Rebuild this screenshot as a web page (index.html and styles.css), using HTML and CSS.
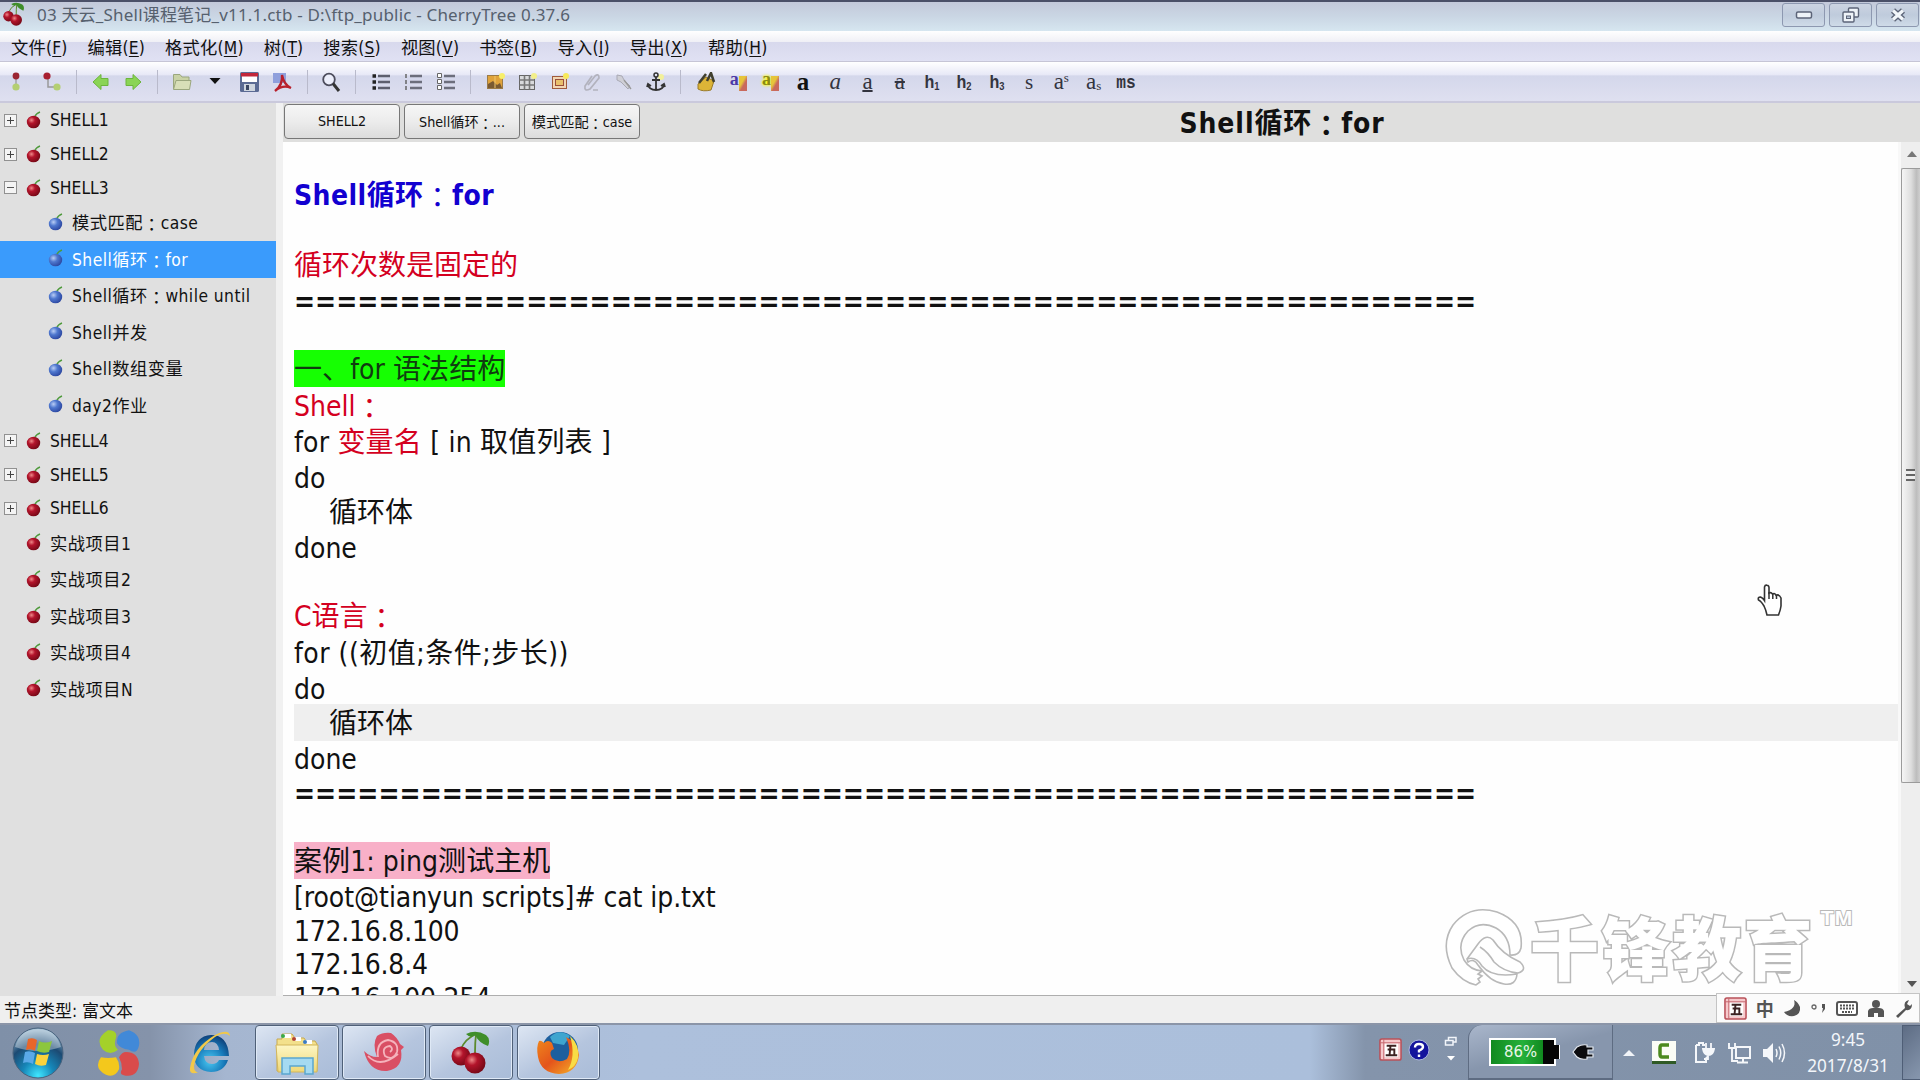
FILE: index.html
```html
<!DOCTYPE html>
<html lang="zh-CN">
<head>
<meta charset="utf-8">
<title>CherryTree</title>
<link rel="stylesheet" href="styles.css">
</head>
<body>
<svg class="defs" width="0" height="0">
  <defs>
    <radialGradient id="redBall" cx=".35" cy=".35" r=".75"><stop offset="0" stop-color="#e88"/><stop offset=".35" stop-color="#b3142b"/><stop offset="1" stop-color="#6d0714"/></radialGradient>
    <radialGradient id="blueBall" cx=".35" cy=".35" r=".75"><stop offset="0" stop-color="#b9cdf5"/><stop offset=".4" stop-color="#4f78cf"/><stop offset="1" stop-color="#27409a"/></radialGradient>
    <radialGradient id="orb" cx=".5" cy=".95" r=".9"><stop offset="0" stop-color="#3fe6ff"/><stop offset=".35" stop-color="#1686b8"/><stop offset=".7" stop-color="#1c4a73"/><stop offset="1" stop-color="#8fb0c8"/></radialGradient>
    <radialGradient id="ieBlue" cx=".45" cy=".7" r=".7"><stop offset="0" stop-color="#49c8f2"/><stop offset=".6" stop-color="#1779b9"/><stop offset="1" stop-color="#0e3f78"/></radialGradient>
    <linearGradient id="fox" x1="0" y1="0" x2="1" y2="1"><stop offset="0" stop-color="#f08a1d"/><stop offset=".5" stop-color="#e4541b"/><stop offset="1" stop-color="#f6b62a"/></linearGradient>
    <linearGradient id="folder" x1="0" y1="0" x2="0" y2="1"><stop offset="0" stop-color="#fdf6c4"/><stop offset="1" stop-color="#f0d878"/></linearGradient>
    <symbol id="cherry" viewBox="0 0 16 18"><path d="M8.5 6Q10 2.5 14 1" fill="none" stroke="#4f9a3c" stroke-width="1.4"/><ellipse cx="7.5" cy="11" rx="6.7" ry="6.3" fill="url(#redBall)"/></symbol>
    <symbol id="berry" viewBox="0 0 16 18"><path d="M8.5 6Q10 2.5 14 1" fill="none" stroke="#4f9a3c" stroke-width="1.4"/><ellipse cx="7.5" cy="11" rx="6.7" ry="6.3" fill="url(#blueBall)"/></symbol>
    <symbol id="cherries" viewBox="0 0 40 44"><path d="M10 18Q14 8 25 3Q24 12 24 22" fill="none" stroke="#5c8a2d" stroke-width="1.8"/><path d="M15 3Q25-2 35 4Q40 8 37 15Q28 12 24 4Q20 8 15 3Z" fill="#3f8e2a"/><circle cx="10" cy="25" r="9.5" fill="url(#redBall)"/><circle cx="24" cy="32" r="10.5" fill="url(#redBall)"/></symbol>
    <symbol id="wubi" viewBox="0 0 24 24"><rect x="1" y="1" width="22" height="22" rx="2" fill="#f6c9cc" stroke="#b9515a" stroke-width="1.6"/><path d="M5 1v22M1 5h22" stroke="#c4666e" fill="none"/><rect x="6" y="6" width="14" height="14" fill="#fff"/><path d="M8 8h10M12 8l-1 10M9 12h7v6M7 18h12" stroke="#3c2222" stroke-width="2" fill="none"/></symbol>
  </defs>
</svg>

<header class="titlebar">
  <svg class="app-icon" width="22" height="25"><use href="#cherries"/></svg>
  <span class="title-text">03 天云_Shell课程笔记_v11.1.ctb - D:\ftp_public - CherryTree 0.37.6</span>
  <div class="window-buttons">
    <span class="win-btn"><svg width="18" height="10"><rect x="1.5" y="2" width="15" height="6" rx="1.5" fill="#eef3f8" stroke="#5c6478" stroke-width="1.5"/></svg></span>
    <span class="win-btn"><svg width="18" height="16"><rect x="6.5" y="1" width="10" height="9" rx="1" fill="#eef3f8" stroke="#5c6478" stroke-width="1.4"/><rect x="1" y="5" width="11" height="10" rx="1" fill="#eef3f8" stroke="#5c6478" stroke-width="1.4"/><rect x="4.5" y="9" width="4" height="2.5" fill="#b9c6d8" stroke="#5c6478"/></svg></span>
    <span class="win-btn"><svg width="18" height="16"><path d="M4 3.5L14 12.5M14 3.5L4 12.5" stroke="#5c6478" stroke-width="6"/><path d="M4 3.5L14 12.5M14 3.5L4 12.5" stroke="#f2f6fa" stroke-width="3.2"/></svg></span>
  </div>
</header>

<nav class="menubar">
  <span>文件(<u>F</u>)</span><span>编辑(<u>E</u>)</span><span>格式化(<u>M</u>)</span><span>树(<u>T</u>)</span><span>搜索(<u>S</u>)</span><span>视图(<u>V</u>)</span><span>书签(<u>B</u>)</span><span>导入(<u>I</u>)</span><span>导出(<u>X</u>)</span><span>帮助(<u>H</u>)</span>
</nav>

<div class="toolbar">
  <div class="group g-node">
    <svg class="tool" viewBox="0 0 24 20"><path d="M12 7v6" stroke="#888"/><circle cx="12" cy="4" r="3.4" fill="#9b2432"/><circle cx="12" cy="15" r="3.6" fill="#b4cf72"/></svg>
    <svg class="tool" viewBox="0 0 24 20"><path d="M8 5v10h8" stroke="#999" stroke-width="1.5" fill="none"/><circle cx="7" cy="4" r="3.6" fill="#a81f30"/><circle cx="17" cy="15" r="3.6" fill="#b4cf72"/></svg>
  </div>
  <div class="group g-nav">
    <svg class="tool" viewBox="0 0 24 20"><path d="M4 10L12 2.5V6.5H19V13.5H12V17.5Z" fill="#8ad455" stroke="#6cb53c"/></svg>
    <svg class="tool" viewBox="0 0 24 20"><path d="M20 10L12 2.5V6.5H5V13.5H12V17.5Z" fill="#8ad455" stroke="#6cb53c"/></svg>
  </div>
  <div class="group g-file">
    <svg class="tool" viewBox="0 0 24 20"><path d="M3.5 17V2.5H10L12 5H19V8" fill="#c9d2a6" stroke="#9ba77e"/><path d="M3.5 17.5L6 8.5H21L19.5 17.5Z" fill="#d8dfb8" stroke="#9ba77e"/></svg>
    <svg class="tool" viewBox="0 0 24 20"><path d="M6.5 6H17.5L12 12Z" fill="#111"/></svg>
    <svg class="tool" viewBox="0 0 24 20"><rect x="4" y="0" width="19" height="20" rx="1.5" fill="#5b6b94"/><rect x="6" y="1" width="15" height="9" fill="#fff"/><rect x="5" y="1" width="17" height="3.5" fill="#c2263a"/><rect x="8" y="12" width="11" height="7" fill="#cfd6df"/><rect x="10" y="13" width="3" height="5" fill="#3b4763"/></svg>
    <svg class="tool" viewBox="0 0 24 20"><rect x="4" y="1" width="13" height="10" fill="#8f9fdc"/><path d="M6 19Q14 13 13 3Q15 13 22 16Q14 12 6 19" fill="none" stroke="#b8202c" stroke-width="2.3"/></svg>
  </div>
  <div class="group g-find">
    <svg class="tool" viewBox="0 0 24 20"><circle cx="10" cy="7.5" r="5.8" fill="#eceefb" stroke="#4c4c5c" stroke-width="1.8"/><path d="M14 11.5L20 19" stroke="#333" stroke-width="3"/></svg>
  </div>
  <div class="group g-list">
    <svg class="tool" viewBox="0 0 24 20"><path d="M8 4H20M8 10H20M8 16H20" stroke="#5d5f6e" stroke-width="2.4"/><path d="M2.5 4h3.5M2.5 10h3.5M2.5 16h3.5" stroke="#222" stroke-width="3.4"/></svg>
    <svg class="tool" viewBox="0 0 24 20"><path d="M8 4H20M8 10H20M8 16H20" stroke="#6c6e7c" stroke-width="2.4"/><path d="M4 2v4M4 8v4M4 14v4" stroke="#666" stroke-width="1.5"/></svg>
    <svg class="tool" viewBox="0 0 24 20"><path d="M9 4H20M9 10H20M9 16H20" stroke="#6c6e7c" stroke-width="2.6"/><path d="M2.5 1.5h4v4h-4zM2.5 7.5h4v4h-4zM2.5 13.5h4v4h-4z" stroke="#666" fill="#fff"/></svg>
  </div>
  <div class="group g-insert">
    <svg class="tool" viewBox="0 0 24 20"><rect x="4.5" y="3.5" width="15" height="13" fill="#e0a33b" stroke="#9c7b47"/><path d="M5 12l5-3 4 4 3-2 2 5H5z" fill="#7a5a32"/><path d="M12 4v12" stroke="#f0c66c"/><circle cx="19" cy="4" r="3" fill="#f7ef6a"/></svg>
    <svg class="tool" viewBox="0 0 24 20"><rect x="4.5" y="3.5" width="15" height="14" fill="#d9dadc" stroke="#666"/><path d="M4.5 8h15M4.5 13h15M9.5 3.5v14M14.5 3.5v14" stroke="#777" stroke-width="1.6"/><circle cx="19" cy="4" r="3" fill="#f3ef8a"/></svg>
    <svg class="tool" viewBox="0 0 24 20"><rect x="4.5" y="4.5" width="14" height="12" fill="#f1d6b3" stroke="#a05b3c"/><rect x="7.5" y="7.5" width="8" height="6" fill="#e9c06b" stroke="#9b4f3a"/><circle cx="18" cy="4" r="3" fill="#f7e95a"/></svg>
    <svg class="tool" viewBox="0 0 24 20"><path d="M8 13L15 4Q19 1 19 6L10 17Q4 20 5 14L12 4M13 18h5" fill="none" stroke="#b2b2bd" stroke-width="1.7"/></svg>
    <svg class="tool" viewBox="0 0 24 20"><path d="M5 3l5 1 2 4 6 6-2 3-7-7-4-2z" fill="#cfcfd6" stroke="#a9a9b4"/><path d="M12 8l7 9" stroke="#999" stroke-width="1.3"/></svg>
    <svg class="tool" viewBox="0 0 24 20"><circle cx="17" cy="5" r="3" fill="#f2f09a"/><circle cx="12" cy="3" r="2" fill="none" stroke="#333" stroke-width="1.5"/><path d="M12 5V18M8 8h8M3.5 12Q5 18 12 18Q19 18 20.5 12M3 15l1-3 3 2M21 15l-1-3-3 2" fill="none" stroke="#333" stroke-width="1.8"/></svg>
  </div>
  <div class="group g-format">
    <svg class="tool" viewBox="0 0 24 20"><path d="M4 12L12 5L20 9L17 18Q9 20 4 17Z" fill="#dcb437" stroke="#9a7b28"/><path d="M13 9L17 1L20 10M5 11l7-9" stroke="#41402f" stroke-width="2.5" fill="none"/></svg>
    <span class="tool letter color-a">a<i class="brush"></i></span>
    <span class="tool letter color-a mark">a<i class="brush"></i></span>
    <span class="tool letter bold">a</span>
    <span class="tool letter ital">a</span>
    <span class="tool letter under">a</span>
    <span class="tool letter strike">a</span>
    <span class="tool letter head">h<small>1</small></span>
    <span class="tool letter head">h<small>2</small></span>
    <span class="tool letter head">h<small>3</small></span>
    <span class="tool letter little">s</span>
    <span class="tool letter sup">a<small>s</small></span>
    <span class="tool letter sub">a<small>s</small></span>
    <span class="tool letter mono">ms</span>
  </div>
</div>

<main class="workspace">
  <aside class="tree">
    <div class="node"><i class="box plus"></i><svg class="fruit"><use href="#cherry"/></svg><span>SHELL1</span></div>
    <div class="node"><i class="box plus"></i><svg class="fruit"><use href="#cherry"/></svg><span>SHELL2</span></div>
    <div class="node"><i class="box"></i><svg class="fruit"><use href="#cherry"/></svg><span>SHELL3</span></div>
    <div class="node tall child"><svg class="fruit"><use href="#berry"/></svg><span>模式匹配<b class="cn" lang="ja">：</b>case</span></div>
    <div class="node tall child selected"><svg class="fruit"><use href="#berry"/></svg><span>Shell循环<b class="cn" lang="ja">：</b>for</span></div>
    <div class="node tall child"><svg class="fruit"><use href="#berry"/></svg><span>Shell循环<b class="cn" lang="ja">：</b>while until</span></div>
    <div class="node tall child"><svg class="fruit"><use href="#berry"/></svg><span>Shell并发</span></div>
    <div class="node tall child"><svg class="fruit"><use href="#berry"/></svg><span>Shell数组变量</span></div>
    <div class="node tall child"><svg class="fruit"><use href="#berry"/></svg><span>day2作业</span></div>
    <div class="node"><i class="box plus"></i><svg class="fruit"><use href="#cherry"/></svg><span>SHELL4</span></div>
    <div class="node"><i class="box plus"></i><svg class="fruit"><use href="#cherry"/></svg><span>SHELL5</span></div>
    <div class="node"><i class="box plus"></i><svg class="fruit"><use href="#cherry"/></svg><span>SHELL6</span></div>
    <div class="node tall leaf"><svg class="fruit"><use href="#cherry"/></svg><span>实战项目1</span></div>
    <div class="node tall leaf"><svg class="fruit"><use href="#cherry"/></svg><span>实战项目2</span></div>
    <div class="node tall leaf"><svg class="fruit"><use href="#cherry"/></svg><span>实战项目3</span></div>
    <div class="node tall leaf"><svg class="fruit"><use href="#cherry"/></svg><span>实战项目4</span></div>
    <div class="node tall leaf"><svg class="fruit"><use href="#cherry"/></svg><span>实战项目N</span></div>
  </aside>

  <section class="content">
    <div class="tabs">
      <span class="tab">SHELL2</span>
      <span class="tab"><span>Shell循环<b class="cn" lang="ja">：</b>...</span></span>
      <span class="tab active"><span>模式匹配<b class="cn" lang="ja">：</b>case</span></span>
      <h1 class="node-title">Shell循环<b class="cn" lang="ja">：</b>for</h1>
    </div>
    <div class="editor-row">
      <article class="editor">
        <div class="line"></div>
        <div class="line cjk heading">Shell循环<b class="cn" lang="ja">：</b>for</div>
        <div class="line"></div>
        <div class="line cjk red">循环次数是固定的</div>
        <div class="line rule">========================================================</div>
        <div class="line"></div>
        <div class="line cjk"><span class="mark-green">一、for 语法结构</span></div>
        <div class="line cjk red">Shell<b class="cn" lang="ja">：</b></div>
        <div class="line cjk spaced">for <span class="red">变量名</span> [ in 取值列表 ]</div>
        <div class="line">do</div>
        <div class="line cjk indent">循环体</div>
        <div class="line">done</div>
        <div class="line"></div>
        <div class="line cjk red">C语言<b class="cn" lang="ja">：</b></div>
        <div class="line cjk spaced wider">for ((初值;条件;步长))</div>
        <div class="line">do</div>
        <div class="line cjk indent current">循环体</div>
        <div class="line">done</div>
        <div class="line rule">========================================================</div>
        <div class="line"></div>
        <div class="line cjk"><span class="mark-pink">案例1: ping测试主机</span></div>
        <div class="line prompt">[root@tianyun scripts]# cat ip.txt</div>
        <div class="line address">172.16.8.100</div>
        <div class="line address">172.16.8.4</div>
        <div class="line address">172.16.100.254</div>
      </article>
      <div class="scrollbar">
        <i class="arrow up"></i>
        <div class="thumb"><i class="grip"></i></div>
        <i class="arrow down"></i>
      </div>
    </div>
  </section>
</main>

<div class="watermark">
  <svg width="82" height="80" viewBox="0 0 82 80"><path d="M32 77Q18 74 8 60Q-4 36 9 17Q26-4 53 4Q80 14 77 40Q75 48 66 47Q66 28 52 20Q36 12 24 23Q12 36 20 52Q26 62 38 63L34 66L38 68L34 71L36 74Z" fill="#fff" stroke="#b9b9b9" stroke-width="1.6"/><path d="M23 51L34 36Q42 25 49 32Q58 46 76 54Q84 62 74 65Q60 64 50 54Q44 44 36 39M23 51Q32 48 38 58Q48 70 73 66Q72 78 60 76Q46 74 34 57Q30 50 24 54Z" fill="#fff" stroke="#b9b9b9" stroke-width="1.6"/></svg>
  <span class="wm-name">千锋教育</span><span class="wm-tm">TM</span>
</div>

<svg class="cursor" width="26" height="33" viewBox="0 0 26 33"><path d="M7 22Q4 17 1.5 16Q.5 13 3.5 13Q6 14 7.5 16.5V3Q8 .8 10 1.2Q12 1.5 12 3.5V9Q14 7.8 15.5 10Q18 8.8 19 11.2Q22 10 24 14V22Q23.5 26 21.5 31H10Q9 26 7 22Z" fill="#fff" stroke="#333" stroke-width="1.6"/><path d="M12 8v7M15.8 10v5M19.5 11v4" stroke="#333" stroke-width="1.5"/></svg>

<footer class="statusbar">
  <span class="node-type">节点类型: 富文本</span>
  <div class="ime-bar">
    <svg width="23" height="23"><use href="#wubi"/></svg>
    <span class="ime-zh">中</span>
    <svg width="19" height="19"><path d="M11 1Q14 10 1 13Q4 18 11 17Q18 15 17 8Q15 3 11 1Z" fill="#555"/></svg>
    <svg width="17" height="12"><circle cx="4" cy="5" r="2" fill="none" stroke="#666" stroke-width="1.3"/><path d="M12 2h3v5l-3 4 1-5h-1z" fill="#555"/></svg>
    <svg width="22" height="17"><rect x="1" y="2" width="20" height="13" rx="2" fill="#fff" stroke="#555" stroke-width="2"/><path d="M4 5.5h14M4 8.500h14M6 12h10" stroke="#555" stroke-width="2" stroke-dasharray="2 1"/></svg>
    <svg width="18" height="19"><circle cx="9" cy="5" r="4" fill="#555"/><path d="M1 18V12Q2 9 6 9H12Q16 9 17 12V18H11V14H7V18Z" fill="#555"/></svg>
    <svg width="19" height="19"><path d="M2 17L11 9Q9 2 15 1L13 5L16 7L18 5Q18 12 12 11L4 19Z" fill="#555"/></svg>
  </div>
</footer>

<footer class="taskbar">
  <div class="launch">
    <svg width="52" height="52" viewBox="0 0 52 52"><circle cx="26" cy="26" r="25" fill="url(#orb)" stroke="#48627d"/><path d="M3 20Q8 2 26 2Q44 2 49 20Q26 28 3 20" fill="#fff" opacity=".35"/><path d="M16 12Q21 10 25 13L23 24Q19 21 14 23Z" fill="#e8662a"/><path d="M27 14Q33 17 40 14L37 25Q31 27 25 24Z" fill="#8cc63e"/><path d="M13 25Q18 23 23 26L21 37Q16 34 11 36Z" fill="#5aa9e8"/><path d="M25 27Q31 29 37 27L34 38Q28 40 23 37Z" fill="#fbd23c"/></svg>
    <svg width="46" height="50" viewBox="0 0 46 46" preserveAspectRatio="none"><path d="M12 2Q22 2 20 9Q17 16 22 20Q14 26 7 20Q-2 10 12 2Z" fill="#a4d12a"/><path d="M33 2Q45 6 43 16Q41 25 33 20Q24 19 21 14Q20 4 33 2Z" fill="#4189d8"/><path d="M5 27Q12 28 20 27Q24 32 23 38Q19 46 10 43Q-3 37 5 27Z" fill="#f3c81c"/><path d="M30 22Q42 22 43 33Q42 44 32 44Q22 44 26 38Q26 32 23 27Q26 22 30 22Z" fill="#d94b4b"/></svg>
    <svg width="46" height="46" viewBox="0 0 46 46"><path fill-rule="evenodd" d="M24 5Q41 5 42 26H17Q18 34 25 34Q30 34 32 30H41Q37 42 24 42Q7 41 7 24Q8 6 24 5ZM17 20H32Q31 12 25 12Q18 12 17 20Z" fill="url(#ieBlue)"/><path d="M43 6Q42-2 28 5Q6 18 3 38Q2 46 12 42Q7 43 7 36Q10 20 28 7Q38 1 43 6Z" fill="#f1c84a"/></svg>
  </div>
  <div class="tasks">
    <span class="task"><svg width="46" height="44" viewBox="0 0 46 44"><path d="M3 8H8V3H18L21 7H30L32 10H41L43 13V40H3Z" fill="#f3e08c" stroke="#c7a950"/><path d="M9 5h8M19 8h8M31 11h7" stroke="#fff" stroke-width="4"/><circle cx="9" cy="5" r="2" fill="#3aa948"/><circle cx="20" cy="8" r="2" fill="#b2412e"/><circle cx="31" cy="11" r="2" fill="#3b7bc4"/><path d="M2 14H44L43 41H4Z" fill="url(#folder)" stroke="#d2b65c"/><path d="M8 43V27H39V43H31V35H16V43Z" fill="#a5daf1" stroke="#5ba6cf" stroke-width="1.5"/></svg></span>
    <span class="task"><svg width="42" height="42" viewBox="0 0 42 42"><path d="M14 4Q20 0 28 1Q34 5 37 12L41 15L38 18Q41 36 24 39Q6 40 1 19Q7 25 14 25Q9 12 14 4Z" fill="#d94f64"/><path d="M15 25Q13 10 25 8Q36 10 34 20Q30 29 22 24Q18 15 27 14Q31 17 27 20M5 24Q17 37 35 22" fill="none" stroke="#f5b3bc" stroke-width="1.8"/></svg></span>
    <span class="task"><svg width="42" height="44" viewBox="0 0 40 44"><use href="#cherries"/></svg></span>
    <span class="task"><svg width="44" height="44" viewBox="0 0 44 44"><circle cx="24" cy="19" r="18" fill="#1d5f9e"/><path d="M14 6Q23-3 34 5L28 14L17 12Z" fill="#3ea5cf"/><path d="M3 10Q5 9 8 12Q12 8 16 12L18 18Q12 20 16 27Q22 33 31 28Q36 20 30 6Q42 12 43 24Q41 42 23 43Q5 42 2 26Q0 16 3 10Z" fill="url(#fox)"/><path d="M34 5Q44 14 42 27Q40 36 32 39Q40 25 34 5Z" fill="#f8dc45"/></svg></span>
  </div>
  <div class="lang">
    <svg width="23" height="23"><use href="#wubi"/></svg>
    <svg width="22" height="22" viewBox="0 0 22 22"><circle cx="11" cy="11" r="10" fill="#14149c" stroke="#aab4dd"/><path d="M7 8.5Q7 5 11 5Q15 5 15 8Q15 10 11 11.5V13.5M11 15.5v2.5" fill="none" stroke="#fff" stroke-width="2.4"/></svg>
    <svg width="14" height="28" viewBox="0 0 14 28"><path d="M4.5 4.5V1.5H12V6H9M1.5 4.5H9V9H1.5Z" fill="none" stroke="#f2f5fa" stroke-width="1.5"/><path d="M3 20H11L7 24.5Z" fill="#fff"/></svg>
  </div>
  <div class="power">
    <span class="battery">86%</span>
    <svg width="24" height="18" viewBox="0 0 24 18"><path d="M1 9L5 4Q10 1 15 2V4H21V7H16V11H21V14H15V16Q8 17 5 14Z" fill="#0b0b0e" stroke="#e4e9f0" stroke-width="1.2"/></svg>
  </div>
  <div class="tray">
    <svg width="12" height="8"><path d="M0 7H12L6 1Z" fill="#f1f4f8"/></svg>
    <svg width="24" height="23" viewBox="0 0 24 23"><path d="M0 0H24V20H0Z" fill="#fbfdf6"/><path d="M0 20H24V23H0Z" fill="#2f5a26"/><path d="M17 4H10Q8 4 8 7V13Q8 16 10 16H17" fill="none" stroke="#4c8a1e" stroke-width="3.5"/></svg>
    <svg width="22" height="24" viewBox="0 0 22 24"><path d="M3 4H6V2H10V4H12M3 4V21H13V17" fill="none" stroke="#f5f7fa" stroke-width="2"/><path d="M13 2v5M18 2v5M10 8H21Q20 14 15.5 14Q11 14 10 8ZM15 14v4h-4" fill="#f5f7fa" stroke="#f5f7fa" stroke-width="1.8"/></svg>
    <svg width="24" height="24" viewBox="0 0 24 24"><path d="M8 6H22V17H8ZM15 17v4M9 21.5H20" fill="#8090a8" stroke="#f5f7fa" stroke-width="2"/><path d="M1 2v5h6V2M4 7v13h6" fill="none" stroke="#f5f7fa" stroke-width="1.9"/></svg>
    <svg width="24" height="22" viewBox="0 0 24 22"><path d="M1 7H5L11 1V21L5 15H1Z" fill="#f5f7fa"/><path d="M14 7Q16 11 14 15M17 4.5Q20.5 11 17 17.5M20 2Q25 11 20 20" fill="none" stroke="#f5f7fa" stroke-width="1.5"/></svg>
  </div>
  <div class="clock"><span>9:45</span><span>2017/8/31</span></div>
  <div class="show-desktop"></div>
</footer>
</body>
</html>
```
FILE: styles.css
```css
* { box-sizing: border-box; }
body {
  margin: 0;
  width: 1920px;
  height: 1080px;
  overflow: hidden;
  display: flex;
  flex-direction: column;
  position: relative;
  background: #dfdfdf;
  color: #111;
  font-family: "DejaVu Sans Condensed", "DejaVu Sans", "Noto Sans CJK SC", sans-serif;
  font-stretch: condensed;
  font-size: 17.3px;
  white-space: nowrap;
}
.defs { position: absolute; }
.cn { font-family: "Noto Sans CJK JP", sans-serif; font-weight: 400; line-height: 0; vertical-align: -.12em; }

/* title bar */
.titlebar {
  flex: none;
  height: 31px;
  display: flex;
  align-items: center;
  padding-left: 3px;
  border-top: 2px solid #4b5068;
  background: linear-gradient(#c3c9da, #cad6e4 50%, #d6e6f0);
}
.app-icon { margin-top: -5px; }
.title-text {
  margin: -6px 0 0 12px;
  color: #56606e;
  font-family: "Noto Sans", "Noto Sans CJK SC", sans-serif;
  font-size: 17px;
  letter-spacing: .19px;
}
.window-buttons { margin-left: auto; display: flex; gap: 4px; align-self: flex-start; padding: 1px 1px 0 0; }
.win-btn {
  width: 43px;
  height: 24px;
  display: flex;
  align-items: center;
  justify-content: center;
  border: 1px solid #8d98b0;
  border-radius: 3px;
  background: linear-gradient(#ccd4e2, #bfcbdc 50%, #cfdbe8);
}

/* menu bar */
.menubar {
  flex: none;
  height: 31px;
  display: flex;
  align-items: center;
  gap: 20px;
  padding-left: 11px;
  border-bottom: 1px solid #c6c5d6;
  background: linear-gradient(#fff, #f0f0f6 35%, #d8d9ed 38%, #e0e1f3);
  letter-spacing: .19px;
}
.menubar u { text-decoration-thickness: 1px; text-underline-offset: 2px; }

/* toolbar */
.toolbar {
  flex: none;
  height: 41px;
  display: flex;
  align-items: center;
  border-bottom: 2px solid #cac9dc;
  background: linear-gradient(#fff, #e8e9f7 32%, #d4d7eb 36%, #dfe0f0);
}
.group { display: flex; align-items: center; height: 24px; gap: 8.3px; border-right: 1px solid #b9bacb; padding-left: 12px; }
.tool { flex: none; width: 24px; height: 20px; }
.g-node { width: 77px; padding-left: 4px; gap: 12px; }
.g-nav { width: 81px; }
.g-file { width: 150px; gap: 9px; }
.g-find { width: 48px; padding-left: 11px; }
.g-list { width: 115px; padding-left: 14px; }
.g-insert { width: 210px; }
.g-format { border: 0; padding-left: 13px; }
.letter {
  display: flex;
  align-items: center;
  justify-content: center;
  color: #33343f;
  font: 23px/20px "Liberation Serif", serif;
}
.bold { font-weight: 700; font-size: 25px; color: #111; }
.ital { font-style: italic; }
.under { text-decoration: underline 2px; }
.strike { text-decoration: line-through 2px; }
.head, .mono { font: 700 19px/22px "Liberation Sans", sans-serif; transform: scaleX(.85); }
.mono { font-family: "Liberation Mono", monospace; padding-top: 2px; }
.letter small { font-size: 11px; align-self: flex-end; line-height: 12px; }
.sup small { align-self: flex-start; font-size: 13px; }
.sub small { font-size: 13px; }
.little { font-size: 21px; }
.color-a { font-weight: 700; font-size: 18px; line-height: 14px; color: #4b39a8; align-items: flex-start; }
.mark { color: #8c8a14; text-shadow: 0 0 3px #ff0, 0 0 3px #ff0; }
.brush { width: 8px; height: 15px; margin-top: 4px; background: linear-gradient(120deg, #e6c53b 40%, #c9695d 60%); }

/* workspace */
.workspace { flex: none; height: 893px; display: flex; }
.tree { width: 276px; flex: none; background: #e0e0e0; padding-top: .5px; }
.node { height: 33.8px; display: flex; align-items: center; padding-left: 4px; }
.node.tall { height: 36.5px; padding-bottom: 2.5px; letter-spacing: .45px; }
.node.child { padding-left: 48px; }
.node.leaf { padding-left: 26px; }
.node.selected { background: #3a9bfc; color: #fff; }
.box {
  width: 13px;
  height: 13px;
  margin-right: 9px;
  border: 1px solid #919191;
  background: linear-gradient(#555, #555) center / 7px 1px no-repeat, #f4f4f4;
}
.box.plus { background: linear-gradient(#444, #444) center / 7px 1px no-repeat, linear-gradient(#444, #444) center / 1px 7px no-repeat, #f4f4f4; }
.fruit { width: 16px; height: 18px; margin-right: 8px; }

.content { flex: 1; display: flex; flex-direction: column; border-left: 7px solid #f1f1f1; min-width: 0; }
.tabs { height: 39px; flex: none; display: flex; align-items: flex-start; gap: 4px; padding: 1px 0 0 1px; background: #dfdfde; }
.tab {
  width: 116px;
  height: 35px;
  display: flex;
  align-items: center;
  justify-content: center;
  padding-bottom: 2px;
  border: 1.5px solid #777;
  border-radius: 4px;
  background: linear-gradient(#f6f6f6, #ececec 50%, #dcdcdc);
  font-size: 14.2px;
}
.node-title { flex: 1; margin: 0; text-align: center; font-size: 28px; line-height: 39px; letter-spacing: .9px; }
.node-title .cn { font-weight: 700; }

.editor-row { flex: 1; display: flex; min-height: 0; background: #fefefe; border-bottom: 1.5px solid #aeaeae; }
.editor { flex: 1; overflow: hidden; padding-left: 11px; font-size: 28px; }
.line { height: 33.7px; line-height: 37.3px; }
.line.cjk { height: 36.6px; line-height: 40.2px; }
.line.prompt { height: 35px; line-height: 37.3px; letter-spacing: -.06px; }
.line.rule { font-weight: 700; }
.line.heading { color: #1200d0; font-weight: 700; letter-spacing: .45px; }
.line.spaced { letter-spacing: .2px; }
.line.wider { letter-spacing: .5px; }
.line.address { letter-spacing: -.25px; line-height: 36px; }
.red { color: #d4001f; }
.indent { padding-left: 35px; }
.current { background: #efefef; }
.mark-green, .mark-pink { display: inline-block; height: 36.6px; letter-spacing: .07px; }
.mark-green { background: #16ff02; color: #103c10; }
.mark-pink { background: #f8b0c8; }

.scrollbar { width: 22px; flex: none; display: flex; flex-direction: column; background: #eeeeee; border-left: 3px solid #f8f8f8; }
.thumb {
  height: 615px;
  display: flex;
  align-items: center;
  padding-left: 4px;
  border: 1.5px solid #9b9b9b;
  border-right: 0;
  border-radius: 2px 0 0 2px;
  background: linear-gradient(90deg, #f5f5f5, #dedede 50%, #bdbdbd 80%, #cfcfcf);
}
.grip { width: 9px; height: 12px; background: repeating-linear-gradient(#666 0 2px, #eee 2px 5px); }
.arrow { width: 0; height: 0; border: 5px solid transparent; margin-left: 6px; }
.arrow.up { border-bottom: 6px solid #777; border-top: 0; margin-top: 9px; margin-bottom: 10.5px; }
.arrow.down { border-top: 6px solid #555; border-bottom: 0; margin-top: auto; margin-bottom: 8px; }

/* overlays */
.watermark { position: absolute; left: 1444px; top: 908px; display: flex; align-items: flex-start; }
.wm-name {
  margin: -3px 0 0 4px;
  color: #fff;
  font: 900 69px/80px "Noto Sans CJK SC", sans-serif;
  letter-spacing: 2.2px;
  -webkit-text-stroke: 3px #b9b9b9;
  paint-order: stroke fill;
}
.wm-tm {
  margin-left: 6px;
  color: #fff;
  font: 700 21px/19px "Liberation Sans", sans-serif;
  letter-spacing: 1px;
  -webkit-text-stroke: 2px #b9b9b9;
  paint-order: stroke fill;
}
.cursor { position: absolute; left: 1757px; top: 584px; }

/* status bar */
.statusbar { flex: none; height: 27px; display: flex; align-items: center; justify-content: space-between; padding-left: 4px; background: #efefef; font-size: 17px; }
.ime-bar {
  width: 204px;
  height: 30px;
  margin-top: -3px;
  display: flex;
  align-items: center;
  justify-content: space-between;
  padding: 0 6px 0 7px;
  border: 1px solid #c4c4c4;
  background: #fbfbfb;
  color: #555;
}
.ime-zh { font-size: 18px; font-weight: 700; }

/* taskbar */
.taskbar {
  flex: none;
  height: 57px;
  display: flex;
  border-top: 2px solid #8b95a8;
  background: linear-gradient(90deg, #7f90a8 0, #8593aa 150px, #a5b6d0 225px, #adc0dc 640px, #abbfdb 1310px, #8494ab 1365px, #8091a8);
}
.launch { width: 255px; flex: none; display: flex; align-items: center; padding-left: 12px; }
.launch svg:nth-child(2) { margin-left: 32px; }
.launch svg:nth-child(3) { margin-left: 45px; }
.tasks { display: flex; gap: 3.7px; }
.task {
  width: 83.5px;
  height: 55px;
  display: flex;
  align-items: center;
  justify-content: center;
  border: 1.5px solid #4f6078;
  border-radius: 4px;
  background: linear-gradient(150deg, #dde6f3, #b5c5de 55%, #a9bcd8);
  box-shadow: inset 0 0 0 1px #dfe9f6;
}
.lang { margin-left: auto; display: flex; align-items: center; gap: 6px; padding: 0 10px 6px 0; }
.lang svg:last-child { margin-left: 8px; }
.power {
  width: 145px;
  display: flex;
  align-items: center;
  gap: 16px;
  padding-left: 20px;
  border: solid #5e6c82;
  border-width: 0 1.5px 2px 1px;
  border-radius: 14px 0 0 0;
  background: linear-gradient(165deg, #a9b6cb, #8796ad 50%);
}
.battery {
  position: relative;
  width: 67px;
  height: 28px;
  padding-right: 4px;
  border: 2px solid #fff;
  background: linear-gradient(90deg, #118a20, #25b03a 50%, #118a20 82%, #050505 82%);
  color: #e9f6e9;
  font-size: 16.5px;
  line-height: 24px;
  text-align: center;
}
.battery::after { content: ""; position: absolute; right: -6px; top: 5px; width: 5px; height: 14px; background: #050505; border-right: 1.5px solid #fff; }
.tray { width: 174px; display: flex; align-items: center; padding-left: 10px; }
.tray svg:nth-child(2) { margin-left: 17px; }
.tray svg:nth-child(3) { margin-left: 17px; }
.tray svg:nth-child(4) { margin-left: 13px; }
.tray svg:nth-child(5) { margin-left: 10px; }
.clock { width: 115px; padding-left: 7px; display: flex; flex-direction: column; align-items: center; justify-content: center; color: #f3f6fa; font-family: "Noto Sans", sans-serif; font-size: 17.2px; line-height: 25.5px; }
.show-desktop { width: 18px; border: 1px solid #4f5e76; border-right: 0; background: linear-gradient(135deg, #5d6c84, #8797ae); }
```
